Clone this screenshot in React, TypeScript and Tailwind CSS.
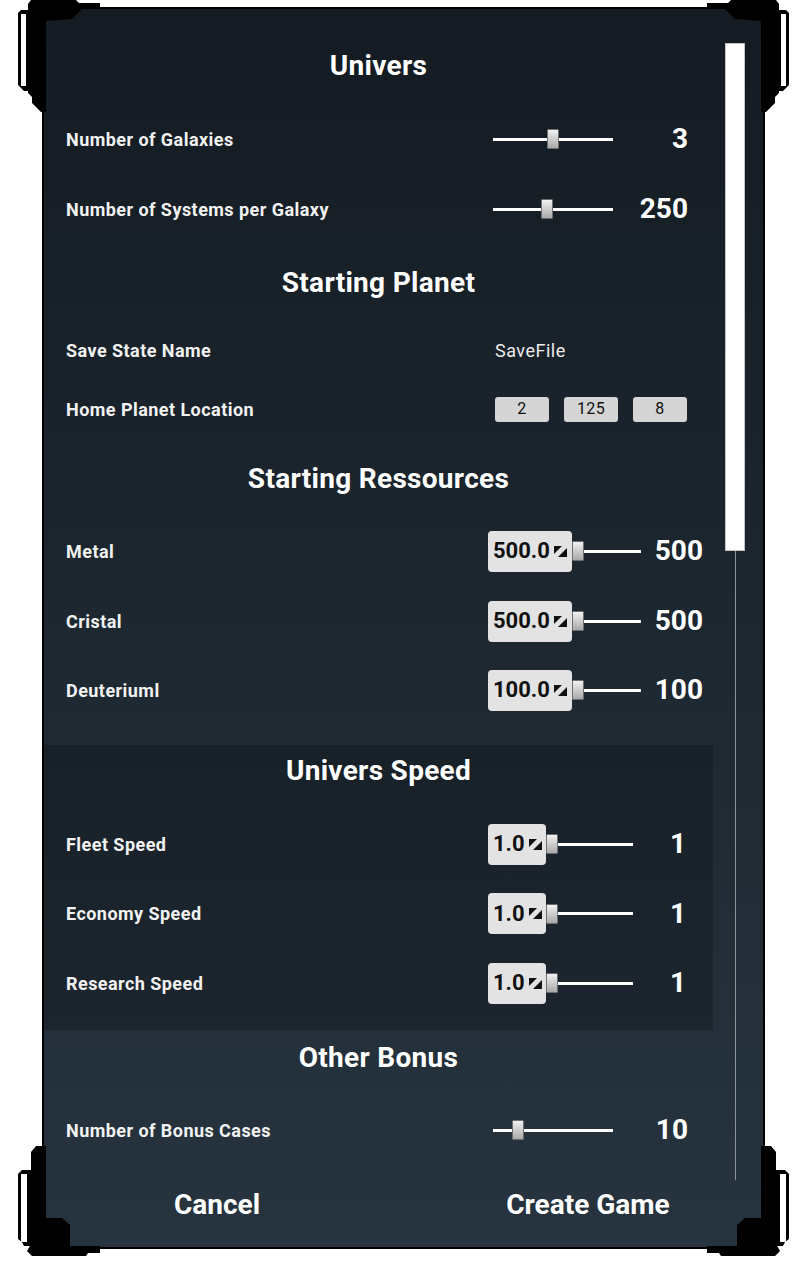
import React from "react";

type SliderRowProps = {
  label: string;
  value: string;
  thumb: number;
  h: string;
};

function Label({ children }: { children: React.ReactNode }) {
  return (
    <span className="w-[422px] shrink-0 text-[18px] font-bold tracking-[0.45px] text-[#f2f2f2]">
      {children}
    </span>
  );
}

function Heading({ children, h }: { children: React.ReactNode; h: string }) {
  return (
    <div className={`flex items-center justify-center ${h}`}>
      <h2 className="text-[28px] font-bold tracking-[0.3px] text-white">
        {children}
      </h2>
    </div>
  );
}

function Thumb() {
  return (
    <div className="h-[20px] w-[12px] shrink-0 rounded-[1px] border border-[#6b6f73] bg-linear-to-b from-[#f2f2f2] to-[#a9a9a9]" />
  );
}

function SliderRow({ label, value, thumb, h }: SliderRowProps) {
  return (
    <div className={`flex items-center ${h}`}>
      <Label>{label}</Label>
      <div className="relative ml-[5px] h-[3px] w-[120px] bg-white">
        <div
          className="absolute -top-[9px] h-[20px] w-[12px] rounded-[1px] border border-[#6b6f73] bg-linear-to-b from-[#f2f2f2] to-[#a9a9a9]"
          style={{ left: thumb }}
        />
      </div>
      <span className="w-[75px] text-right text-[28px] font-bold text-white">
        {value}
      </span>
    </div>
  );
}

function GripIcon() {
  return (
    <svg width="13" height="11" viewBox="0 0 13 11" className="shrink-0">
      <polygon points="0,0 8,0 0,8" fill="#111" />
      <polygon points="13,2 13,11 4,11" fill="#111" />
    </svg>
  );
}

function SpinRow({
  label,
  box,
  value,
  boxW,
  lineW,
  valueW,
  h,
}: {
  label: string;
  box: string;
  value: string;
  boxW: string;
  lineW: string;
  valueW: string;
  h: string;
}) {
  return (
    <div className={`flex items-center ${h}`}>
      <Label>{label}</Label>
      <div
        className={`flex h-[41px] items-center gap-[4px] rounded-[4px] bg-[#e3e3e3] pl-[5px] ${boxW}`}
      >
        <span className="text-[22px] font-bold leading-none text-[#111]">
          {box}
        </span>
        <GripIcon />
      </div>
      <Thumb />
      <div className={`h-[3px] bg-white ${lineW}`} />
      <span
        className={`text-right text-[28px] font-bold text-white ${valueW}`}
      >
        {value}
      </span>
    </div>
  );
}

function CornerTop({ flip }: { flip?: boolean }) {
  return (
    <svg width="100" height="120" viewBox="0 0 100 120">
      <g transform={flip ? "translate(100,0) scale(-1,1)" : undefined}>
        <polygon
          points="28,4 31,0 76,0 79,3 100,3 100,9 82,9 72,19 46,21 46,112 41,112 36,107 32,103 32,97 28,93"
          fill="#000"
        />
        <polygon points="18,13 21,10 29,10 29,91 24,91 21,88 18,85" fill="#000" />
        <rect x="21" y="14" width="5" height="72" fill="#fff" />
      </g>
    </svg>
  );
}

function CornerBottom({ flip }: { flip?: boolean }) {
  return (
    <svg width="100" height="120" viewBox="0 0 100 120">
      <g transform={flip ? "translate(100,0) scale(-1,1)" : undefined}>
        <polygon
          points="36,6 46,6 46,78 62,78 70,85 70,106 100,106 100,113 88,113 86,116 32,116 27,111 31,104 31,12"
          fill="#000"
        />
        <polygon points="18,34 22,30 31,30 31,106 24,106 22,102 18,99" fill="#000" />
        <rect x="21" y="34" width="6" height="68" fill="#fff" />
      </g>
    </svg>
  );
}

export default function App() {
  return (
    <div className="relative h-[1284px] w-[798px] overflow-hidden bg-white pl-[42px] pt-[7px] font-[Roboto,sans-serif]">
      <div className="flex h-[1242px] w-[723px] flex-col border-2 border-black bg-linear-to-b from-[#141b22] to-[#27343f]">
        <div className="flex h-[1171px]">
          {/* Settings list */}
          <div className="w-[669px] shrink-0 pt-[21px]">
            <Heading h="h-[72px]">Univers</Heading>
            <div className="pl-[22px]">
              <SliderRow label="Number of Galaxies" value="3" thumb={54} h="h-[74px]" />
              <SliderRow label="Number of Systems per Galaxy" value="250" thumb={48} h="h-[66px]" />
            </div>
            <Heading h="h-[82px]">Starting Planet</Heading>
            <div className="pl-[22px]">
              <div className="flex h-[52px] items-center">
                <Label>Save State Name</Label>
                <span className="ml-[7px] text-[18px] tracking-[0.5px] text-[#ececec]">
                  SaveFile
                </span>
              </div>
              <div className="flex h-[66px] items-center">
                <Label>Home Planet Location</Label>
                <div className="ml-[7px] flex gap-[15px]">
                  {["2", "125", "8"].map((v) => (
                    <div
                      key={v}
                      className="flex h-[25px] w-[54px] items-center justify-center rounded-[3px] bg-[#d5d5d5] text-[16px] tracking-[0.3px] text-[#111]"
                    >
                      {v}
                    </div>
                  ))}
                </div>
              </div>
            </div>
            <Heading h="h-[74px]">Starting Ressources</Heading>
            <div className="pl-[22px]">
              <SpinRow label="Metal" box="500.0" value="500" boxW="w-[84px]" lineW="w-[57px]" valueW="w-[62px]" h="h-[70px]" />
              <SpinRow label="Cristal" box="500.0" value="500" boxW="w-[84px]" lineW="w-[57px]" valueW="w-[62px]" h="h-[70px]" />
              <SpinRow label="Deuteriuml" box="100.0" value="100" boxW="w-[84px]" lineW="w-[57px]" valueW="w-[62px]" h="h-[68px]" />
            </div>
            <div className="h-[21px]" />
            <div className="bg-black/20 pb-[12px]">
              <Heading h="h-[52px]">Univers Speed</Heading>
              <div className="h-[12px]" />
              <div className="pl-[22px]">
                <SpinRow label="Fleet Speed" box="1.0" value="1" boxW="w-[58px]" lineW="w-[75px]" valueW="w-[53px]" h="h-[70px]" />
                <SpinRow label="Economy Speed" box="1.0" value="1" boxW="w-[58px]" lineW="w-[75px]" valueW="w-[53px]" h="h-[69px]" />
                <SpinRow label="Research Speed" box="1.0" value="1" boxW="w-[58px]" lineW="w-[75px]" valueW="w-[53px]" h="h-[70px]" />
              </div>
            </div>
            <Heading h="h-[56px]">Other Bonus</Heading>
            <div className="pl-[22px]">
              <SliderRow label="Number of Bonus Cases" value="10" thumb={19} h="h-[88px]" />
            </div>
          </div>

          {/* Scrollbar */}
          <div className="w-[50px] shrink-0">
            <div className="ml-[12px] mt-[34px] h-[508px] w-[20px] border border-[#c4c4c4] bg-white" />
            <div className="ml-[22px] h-[629px] w-px bg-[#8c949b]" />
          </div>
        </div>

        {/* Footer buttons */}
        <div className="flex pt-[4px]">
          <button className="w-[346px] text-center text-[28px] font-bold text-white">
            Cancel
          </button>
          <button className="ml-[28px] w-[340px] text-center text-[28px] font-bold text-white">
            Create Game
          </button>
        </div>
      </div>

      {/* Frame corners */}
      <div className="absolute left-0 top-0">
        <CornerTop />
      </div>
      <div className="absolute left-[707px] top-0">
        <CornerTop flip />
      </div>
      <div className="absolute left-0 top-[1140px]">
        <CornerBottom />
      </div>
      <div className="absolute left-[707px] top-[1140px]">
        <CornerBottom flip />
      </div>
    </div>
  );
}
